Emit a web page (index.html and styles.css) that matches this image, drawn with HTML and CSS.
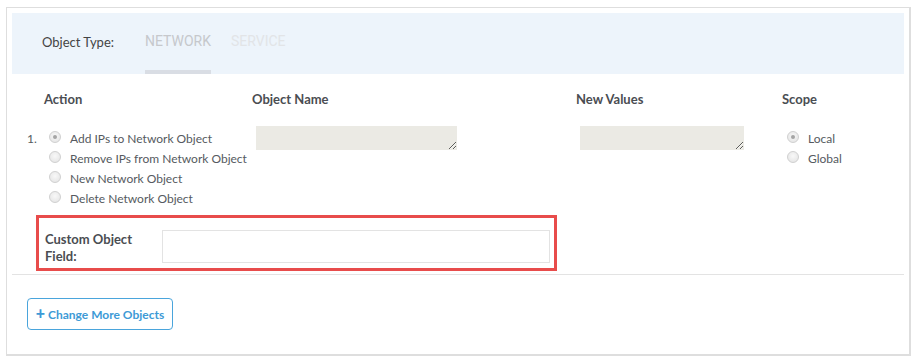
FILE: index.html
```html
<!DOCTYPE html>
<html lang="en">
<head>
    <meta charset="UTF-8">
    <title>Change Objects</title>
    <link rel="stylesheet" href="styles.css">
</head>
<body>
    <div class="panel">
        <div class="type-bar">
            <span class="type-label">Object Type:</span>
            <span class="type-tab active">NETWORK</span>
            <span class="type-tab">SERVICE</span>
        </div>

        <div class="grid grid-head">
            <span></span>
            <span>Action</span>
            <span>Object Name</span>
            <span>New Values</span>
            <span>Scope</span>
        </div>

        <div class="grid grid-row">
            <span class="row-num">1.</span>
            <div class="radio-list">
                <label class="radio checked"><span class="dot"></span>Add IPs to Network Object</label>
                <label class="radio"><span class="dot"></span>Remove IPs from Network Object</label>
                <label class="radio"><span class="dot"></span>New Network Object</label>
                <label class="radio"><span class="dot"></span>Delete Network Object</label>
            </div>
            <div><textarea class="field-name"></textarea></div>
            <div><textarea class="field-values"></textarea></div>
            <div class="radio-list">
                <label class="radio checked"><span class="dot"></span>Local</label>
                <label class="radio"><span class="dot"></span>Global</label>
            </div>
        </div>

        <div class="custom-field">
            <label for="customField">Custom Object Field:</label>
            <input type="text" id="customField">
        </div>

        <div class="footer">
            <button type="button" class="more-button"><span class="plus">+</span>Change More Objects</button>
        </div>
    </div>
</body>
</html>
```

FILE: styles.css
```css
body {
    margin: 0;
    font-family: Lato, "Open Sans", sans-serif;
    font-size: 13px;
    color: #555a60;
    background-color: #fff;
}

.panel {
    margin: 7px 6px 0;
    height: 336px;
    padding: 5px;
    border: 1px solid #dedede;
    border-right-width: 2px;
    border-bottom-width: 2px;
}

.type-bar {
    display: flex;
    align-items: stretch;
    height: 61px;
    padding-left: 30px;
    background-color: #edf4fb;
}

.type-label {
    width: 103px;
    padding-top: 21px;
    color: #444;
    font-size: 13px;
}

.type-tab {
    box-sizing: border-box;
    margin-right: 20px;
    padding-top: 20px;
    font-family: Roboto, "Liberation Sans", sans-serif;
    font-size: 14px;
    color: #e2e4e7;
    border-bottom: 4px solid transparent;
}

.type-tab.active {
    color: #c6c8cc;
    border-bottom-color: #d9dde4;
}

.grid {
    display: grid;
    grid-template-columns: 17px 208px 324px 206px 1fr;
    padding-left: 15px;
}

.grid-head {
    margin-top: 15px;
    line-height: 20px;
    font-weight: bold;
    color: #4a4d52;
}

.grid-row {
    margin-top: 17px;
    line-height: 20px;
}

.row-num {
    padding-top: 3px;
    font-size: 12px;
}

.radio-list {
    display: flex;
    flex-direction: column;
    padding-top: 3px;
    padding-left: 5px;
    font-size: 12px;
}

.radio {
    display: flex;
    align-items: center;
    height: 20px;
    white-space: nowrap;
}

.dot {
    box-sizing: border-box;
    flex: none;
    width: 12px;
    height: 12px;
    margin-right: 9px;
    border: 1px solid #d0d0d0;
    border-radius: 50%;
    background: radial-gradient(circle at 50% 40%, #f8f8f8, #e2e2e2);
    position: relative;
    top: -2px;
}

.radio.checked .dot::after {
    content: "";
    position: absolute;
    left: 3px;
    top: 3px;
    width: 4px;
    height: 4px;
    border-radius: 50%;
    background-color: #a5a5a5;
}

textarea {
    display: block;
    box-sizing: border-box;
    height: 24px;
    margin-left: 4px;
    border: none;
    background-color: #ebeae4;
    font-family: inherit;
}

.field-name {
    width: 201px;
}

.field-values {
    width: 164px;
}

.custom-field {
    display: flex;
    align-items: flex-start;
    width: 505px;
    margin: 6px 0 0 24px;
    padding: 12px 4px 4px 6px;
    border: 3px solid #e84c4b;
}

.custom-field label {
    width: 117px;
    height: 33px;
    margin-top: 1px;
    font-weight: bold;
    line-height: 17px;
    color: #4a4d52;
}

.custom-field input {
    box-sizing: border-box;
    width: 388px;
    height: 33px;
    border: 1px solid #e3e3e3;
}

.footer {
    margin-top: 3px;
    padding: 23px 0 0 15px;
    border-top: 1px solid #e3e3e3;
}

.more-button {
    width: 146px;
    height: 32px;
    padding: 0;
    border: 1px solid #4aa5dc;
    border-radius: 4px;
    background-color: #fff;
    color: #3d9ad6;
    font-family: Lato, "Open Sans", sans-serif;
    font-size: 12px;
    font-weight: bold;
}

.plus {
    margin-right: 3px;
    font-size: 16px;
    font-weight: 900;
    line-height: 0;
}
```
